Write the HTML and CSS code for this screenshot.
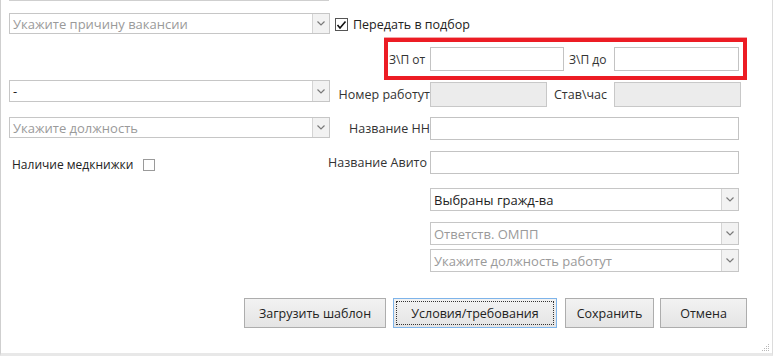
FILE: index.html
```html
<!DOCTYPE html>
<html lang="ru">
<head>
  <meta charset="UTF-8" />
  <title>Вакансия</title>
  <link rel="stylesheet" href="styles.css">
</head>
<body>
  <div class="panel">
    <div class="top-edge"></div>

    <div class="row r1">
      <div class="left">
        <div class="select ph h21">Укажите причину вакансии<span class="arrow"><svg width="8" height="5" viewBox="0 0 8 5"><polyline points="0.5,0.5 4,4 7.5,0.5" /></svg></span></div>
      </div>
      <div class="right">
        <label class="check">
          <span class="box"><svg width="11" height="10" viewBox="0 0 11 10"><polyline points="1.5,5 4,8 9.5,1.5" /></svg></span>
          Передать в подбор
        </label>
      </div>
    </div>

    <div class="row r2">
      <div class="left"></div>
      <div class="right">
        <div class="salary">
          <span class="lbl-from">З\П от</span>
          <input class="inp w-from" type="text">
          <span class="lbl-to">З\П до</span>
          <input class="inp w-to" type="text">
        </div>
      </div>
    </div>

    <div class="row r3">
      <div class="left">
        <div class="select h22">-<span class="arrow"><svg width="8" height="5" viewBox="0 0 8 5"><polyline points="0.5,0.5 4,4 7.5,0.5" /></svg></span></div>
      </div>
      <div class="right field">
        <span class="lbl">Номер работут</span>
        <input class="inp disabled w-num" type="text" disabled>
        <span class="lbl-rate">Став\час</span>
        <input class="inp disabled w-rate" type="text" disabled>
      </div>
    </div>

    <div class="row r4">
      <div class="left">
        <div class="select ph h21">Укажите должность<span class="arrow"><svg width="8" height="5" viewBox="0 0 8 5"><polyline points="0.5,0.5 4,4 7.5,0.5" /></svg></span></div>
      </div>
      <div class="right field">
        <span class="lbl">Название НН</span>
        <input class="inp w-full" type="text">
      </div>
    </div>

    <div class="row r5">
      <div class="left med">
        <span>Наличие медкнижки</span>
        <span class="box empty"></span>
      </div>
      <div class="right field">
        <span class="lbl">Название Авито</span>
        <input class="inp w-full" type="text">
      </div>
    </div>

    <div class="stack">
      <div class="select wide s1">Выбраны гражд-ва<span class="arrow"><svg width="8" height="5" viewBox="0 0 8 5"><polyline points="0.5,0.5 4,4 7.5,0.5" /></svg></span></div>
      <div class="select wide ph s2">Ответств. ОМПП<span class="arrow"><svg width="8" height="5" viewBox="0 0 8 5"><polyline points="0.5,0.5 4,4 7.5,0.5" /></svg></span></div>
      <div class="select wide ph s3">Укажите должность работут<span class="arrow"><svg width="8" height="5" viewBox="0 0 8 5"><polyline points="0.5,0.5 4,4 7.5,0.5" /></svg></span></div>
    </div>

    <div class="buttons">
      <button class="btn b1">Загрузить шаблон</button>
      <button class="btn b2 focus"><span>Условия/требования</span></button>
      <button class="btn b3">Сохранить</button>
      <button class="btn b4">Отмена</button>
    </div>

    <div class="grip">
      <svg width="8" height="8" viewBox="0 0 8 8">
        <rect x="6" y="0" width="1" height="1" />
        <rect x="4" y="2" width="1" height="1" /><rect x="6" y="2" width="1" height="1" />
        <rect x="2" y="4" width="1" height="1" /><rect x="4" y="4" width="1" height="1" /><rect x="6" y="4" width="1" height="1" />
        <rect x="0" y="6" width="1" height="1" /><rect x="2" y="6" width="1" height="1" /><rect x="4" y="6" width="1" height="1" /><rect x="6" y="6" width="1" height="1" />
      </svg>
    </div>
  </div>
</body>
</html>
```

FILE: styles.css
```css
body {
  margin: 0;
  font-family: 'Open Sans', 'Noto Sans', sans-serif;
  font-size: 12px;
  color: #333;
  background: #fff;
}

.panel {
  position: relative;
  box-sizing: border-box;
  width: 773px;
  height: 356px;
  border-left: 1px solid #cfcfcf;
  border-right: 1px solid #dcdcdc;
  border-bottom: 3px solid #e8e8e8;
}

.top-edge {
  margin-left: 8px;
  width: 320px;
  height: 1px;
  background: #cfcfcf;
}

.row {
  display: flex;
  align-items: flex-start;
}

.left {
  box-sizing: border-box;
  flex: none;
  width: 321px;
  margin-left: 8px;
}

.right {
  margin-left: 5px;
}

.r1 { margin-top: 12px; height: 24px; }
.r2 { height: 43px; }
.r3 { height: 37px; }
.r4 { height: 34px; }
.r5 { height: 35px; }

/* dropdowns */
.select {
  position: relative;
  box-sizing: border-box;
  display: flex;
  align-items: center;
  height: 21px;
  padding-left: 3px;
  border: 1px solid #c6c6c6;
  background: #fff;
  color: #222;
  font-size: 13px;
  white-space: nowrap;
}

.select.h22 { height: 22px; }
.select.ph { color: #9a9a9a; }

.arrow {
  position: absolute;
  top: 0;
  right: 0;
  bottom: 0;
  width: 16px;
  display: flex;
  align-items: center;
  justify-content: center;
  border-left: 1px solid #d4d4d4;
  background: #f2f2f2;
}

.arrow svg polyline {
  fill: none;
  stroke: #7a7a7a;
  stroke-width: 1.2;
}

/* checkboxes */
.check {
  display: flex;
  align-items: center;
  gap: 5px;
  margin-top: 3px;
  color: #222;
  font-size: 12.5px;
}

.box {
  box-sizing: border-box;
  display: inline-flex;
  align-items: center;
  justify-content: center;
  flex: none;
  width: 13px;
  height: 13px;
  border: 1px solid #555;
  background: #fff;
}

.box svg polyline {
  fill: none;
  stroke: #111;
  stroke-width: 1.6;
}

.box.empty {
  width: 12px;
  height: 12px;
  border-color: #9a9a9a;
}

/* salary highlight */
.salary {
  box-sizing: border-box;
  display: flex;
  align-items: center;
  height: 42px;
  margin-left: 49px;
  margin-top: 1px;
  padding-right: 4px;
  border: 4px solid #ec1c24;
  box-shadow: 0 -1px 0 #f5a3a6;
}

.lbl-from {
  width: 41px;
  padding-left: 1px;
  white-space: nowrap;
}

.lbl-to {
  width: 45px;
  padding-left: 5px;
  white-space: nowrap;
}

/* text inputs */
.inp {
  box-sizing: border-box;
  flex: none;
  height: 24px;
  margin: 0;
  border: 1px solid #c3c3c3;
  background: #fff;
  font: inherit;
}

.inp.disabled {
  background: #ececec;
  border-color: #c8c8c8;
}

.w-from { width: 134px; }
.w-to { width: 125px; }
.w-num { width: 117px; height: 25px; }
.w-rate { width: 127px; height: 25px; }
.w-full { width: 309px; height: 23px; }

.field {
  display: flex;
  align-items: center;
}

.r3 .field { margin-top: 2px; }

.lbl {
  box-sizing: border-box;
  display: flex;
  justify-content: flex-end;
  flex: 0 0 95px;
  min-width: 0;
  white-space: nowrap;
  font-size: 12.5px;
}

.r5 .lbl { padding-right: 3px; }

.lbl-rate {
  box-sizing: border-box;
  flex: 0 0 67px;
  padding-right: 7px;
  text-align: right;
  white-space: nowrap;
  font-size: 12.5px;
}

.med {
  display: flex;
  align-items: center;
  gap: 10px;
  margin-top: 5px;
  padding-left: 3px;
  color: #222;
  font-size: 12px;
}

/* right column dropdowns */
.stack {
  margin-left: 429px;
  width: 309px;
}

.select.wide { height: 23px; }
.s1 { margin-top: 2px; }
.s2 { margin-top: 11px; }
.s3 { margin-top: 4px; }

/* buttons */
.buttons {
  display: flex;
  margin-top: 26px;
  margin-left: 243px;
}

.btn {
  height: 30px;
  margin: 0;
  padding: 0;
  border: 1px solid #adadad;
  background: linear-gradient(#f2f2f2, #e4e4e4);
  font: inherit;
  font-size: 12.5px;
  color: #222;
}

.b1 { width: 142px; }
.b2 { width: 164px; margin-left: 7px; padding: 2px; border-color: #7eb4ea; }
.b3 { width: 89px; margin-left: 8px; }
.b4 { width: 87px; margin-left: 6px; }

.b2 span {
  display: flex;
  align-items: center;
  justify-content: center;
  height: 100%;
  border: 1px dotted #333;
  box-sizing: border-box;
}

.grip {
  position: absolute;
  right: 2px;
  bottom: 1px;
  line-height: 0;
}

.grip svg rect {
  fill: #b8b8b8;
}
```
